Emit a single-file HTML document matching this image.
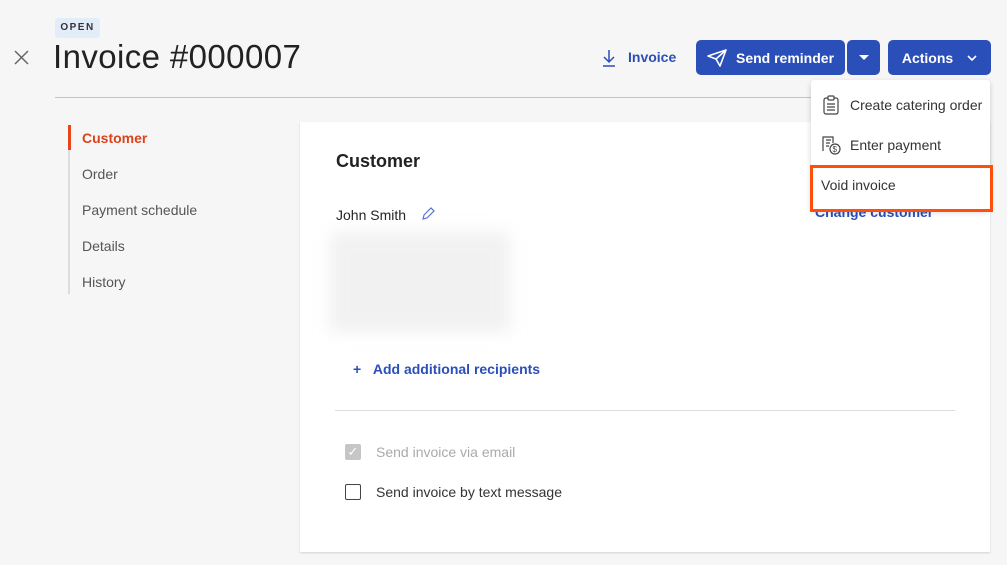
<!DOCTYPE html><html><head><style>
body{margin:0;width:1007px;height:565px;background:#f6f6f6;font-family:"Liberation Sans",sans-serif;position:relative;overflow:hidden;color:#222}
.a{position:absolute}
.btn{background:#2b4fb8;color:#fff;border-radius:5px;font-weight:bold;font-size:14px;display:flex;align-items:center;justify-content:center}
.nav{left:82px;font-size:14px;color:#555}
.blue{color:#2b4fb8}
</style></head><body>
<svg class="a" style="left:14px;top:50px" width="15" height="15"><path d="M1 1l13 13M14 1L1 14" stroke="#666" stroke-width="1.5"/></svg>
<div class="a" style="left:55px;top:18px;width:45px;height:20px;background:#e3edf9;border-radius:3px;font-size:10px;font-weight:bold;letter-spacing:1.5px;color:#333;text-align:center;line-height:20px">OPEN</div>
<div class="a" style="left:53px;top:38px;font-size:33px;letter-spacing:0.4px;color:#222">Invoice #000007</div>
<div class="a" style="left:55px;top:97px;width:760px;height:1px;background:#c4c4c4"></div>
<svg class="a" style="left:601px;top:49px" width="16" height="18" viewBox="0 0 16 18"><path d="M8 1v12M3 8l5 5 5-5M2 17h12" stroke="#2b4fb8" stroke-width="1.5" fill="none"/></svg>
<div class="a blue" style="left:628px;top:49px;font-size:14px;font-weight:bold">Invoice</div>
<div class="a btn" style="left:696px;top:40px;width:149px;height:35px"><svg width="20" height="18" viewBox="0 0 20 18" style="margin-right:9px"><path d="M1 7L19 1 13 17 9 10z M9 10L19 1" stroke="#fff" stroke-width="1.6" fill="none" stroke-linejoin="round"/></svg>Send reminder</div>
<div class="a btn" style="left:847px;top:40px;width:33px;height:35px"><svg width="10" height="6"><path d="M0 0h10L5 5z" fill="#fff"/></svg></div>
<div class="a btn" style="left:888px;top:40px;width:103px;height:35px">Actions<svg width="10" height="8" style="margin-left:14px"><path d="M1 2l4 4 4-4" stroke="#fff" stroke-width="1.6" fill="none"/></svg></div>
<div class="a" style="left:68px;top:125px;width:3px;height:25px;background:#e8451a"></div>
<div class="a" style="left:68px;top:150px;width:2px;height:144px;background:#ddd"></div>
<div class="a nav" style="top:130px;color:#d9441b;font-weight:bold">Customer</div>
<div class="a nav" style="top:166px">Order</div>
<div class="a nav" style="top:202px">Payment schedule</div>
<div class="a nav" style="top:238px">Details</div>
<div class="a nav" style="top:274px">History</div>
<div class="a" style="left:300px;top:122px;width:690px;height:430px;background:#fff;box-shadow:0 1px 2px rgba(0,0,0,.15)"></div>
<div class="a" style="left:336px;top:151px;font-size:18px;font-weight:bold">Customer</div>
<div class="a" style="left:336px;top:207px;font-size:14px">John Smith</div>
<svg class="a" style="left:421px;top:207px" width="14" height="14"><path d="M2 12l1-4 7-7 3 3-7 7z" stroke="#5b6fd0" stroke-width="1.2" fill="none"/></svg>
<div class="a" style="left:330px;top:232px;width:180px;height:100px;background:#f1f1f1;filter:blur(8px)"></div>
<div class="a blue" style="left:815px;top:204px;font-size:14px;font-weight:bold">Change customer</div>
<div class="a blue" style="left:353px;top:361px;font-size:14px;font-weight:bold">+&nbsp;&nbsp;&nbsp;Add additional recipients</div>
<div class="a" style="left:335px;top:410px;width:620px;height:1px;background:#ddd"></div>
<div class="a" style="left:345px;top:444px;width:16px;height:16px;background:#c6c6c6;border-radius:2px;color:#fff;font-size:13px;text-align:center;line-height:16px">✓</div>
<div class="a" style="left:376px;top:444px;font-size:14px;color:#aaa">Send invoice via email</div>
<div class="a" style="left:345px;top:484px;width:14px;height:14px;border:1.3px solid #444;border-radius:2px"></div>
<div class="a" style="left:376px;top:484px;font-size:14px;color:#333">Send invoice by text message</div>
<div class="a" style="left:811px;top:80px;width:179px;height:130px;background:#fff;box-shadow:0 2px 6px rgba(0,0,0,.18);border-radius:3px"></div>
<svg class="a" style="left:822px;top:95px" width="18" height="20"><rect x="2" y="3" width="14" height="16" rx="2" stroke="#444" fill="none" stroke-width="1.2"/><rect x="6" y="1" width="6" height="4" rx="1" fill="#fff" stroke="#444" stroke-width="1.2"/><path d="M5 9h8M5 12h8M5 15h8" stroke="#444" stroke-width="1.2"/></svg>
<div class="a" style="left:850px;top:97px;font-size:14px;color:#333">Create catering order</div>
<svg class="a" style="left:821px;top:135px" width="20" height="20"><path d="M2 16V2h10v6M5 5h5M5 8h4M5 11h3" stroke="#444" stroke-width="1.2" fill="none"/><circle cx="14" cy="14" r="5" stroke="#444" fill="#fff" stroke-width="1.2"/><text x="11.5" y="17" font-size="8" fill="#444" font-family="Liberation Sans">$</text></svg>
<div class="a" style="left:850px;top:137px;font-size:14px;color:#333">Enter payment</div>
<div class="a" style="left:810px;top:165px;width:177px;height:41px;border:3px solid #ff4f0a;background:#fff"></div>
<div class="a" style="left:821px;top:177px;font-size:14px;color:#333">Void invoice</div>
</body></html>
